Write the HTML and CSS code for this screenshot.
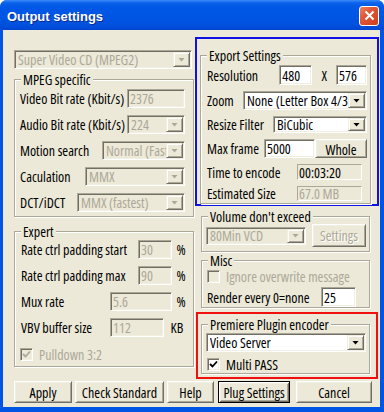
FILE: index.html
```html
<!DOCTYPE html>
<html lang="en">
<head>
  <meta charset="UTF-8" />
  <meta name="viewport" content="width=device-width, initial-scale=1.0"/>
  <title>Output settings</title>
  <link rel="stylesheet" href="styles.css">
</head>
<body>
  <div class="window">
    <div class="titlebar">
      <span class="title">Output settings</span>
      <button class="close" type="button" aria-label="Close">
        <svg width="11" height="11" viewBox="0 0 11 11"><path d="M1.5 1.5 L9.5 9.5 M9.5 1.5 L1.5 9.5" stroke="#fff" stroke-width="2"/></svg>
      </button>
    </div>

    <div class="client">
      <div class="main">
        <!-- left column -->
        <div class="col-left">
          <div class="combo disabled top-combo"><span class="val">Super Video CD (MPEG2)</span><span class="drop"></span></div>

          <fieldset class="group">
            <legend>MPEG specific</legend>
            <div class="gbody mpeg">
              <div class="row h19"><span>Video Bit rate (Kbit/s)</span><span class="field disabled w58">2376</span></div>
              <div class="row h19"><span>Audio Bit rate (Kbit/s)</span><span class="combo disabled w58"><span class="val">224</span><span class="drop"></span></span></div>
              <div class="row h19"><span>Motion search</span><span class="combo disabled w83"><span class="val">Normal (Fast)</span><span class="drop"></span></span></div>
              <div class="row h19"><span>Caculation</span><span class="combo disabled w100"><span class="val">MMX</span><span class="drop"></span></span></div>
              <div class="row h19"><span>DCT/iDCT</span><span class="combo disabled w108"><span class="val">MMX (fastest)</span><span class="drop"></span></span></div>
            </div>
          </fieldset>

          <fieldset class="group expert">
            <legend>Expert</legend>
            <div class="gbody expert-body">
              <div class="row h19"><span class="grow">Rate ctrl padding start</span><span class="field disabled w34">30</span><span class="unit">%</span></div>
              <div class="row h19"><span class="grow">Rate ctrl padding max</span><span class="field disabled w34">90</span><span class="unit">%</span></div>
              <div class="row h19"><span class="grow">Mux rate</span><span class="field disabled w62">5.6</span><span class="unit">%</span></div>
              <div class="row h19"><span class="grow">VBV buffer size</span><span class="field disabled w54">112</span><span class="unit kb">KB</span></div>
              <div class="row h13 chk-row pulldown">
                <span class="check disabled"><svg width="9" height="9" viewBox="0 0 9 9"><path d="M1 4 L3.5 6.5 L8 1.5" fill="none" stroke="#aca899" stroke-width="1.8"/></svg></span>
                <span class="muted">Pulldown 3:2</span>
              </div>
            </div>
          </fieldset>
        </div>

        <!-- right column -->
        <div class="col-right">
          <div class="frame-blue">
            <fieldset class="group export">
              <legend>Export Settings</legend>
              <div class="gbody export-body">
                <div class="row h20">
                  <span class="lbl-res">Resolution</span>
                  <span class="field w33">480</span>
                  <span class="times">X</span>
                  <span class="field w31">576</span>
                </div>
                <div class="row h19"><span>Zoom</span><span class="combo w124"><span class="val">None (Letter Box 4/3)</span><span class="drop"></span></span></div>
                <div class="row h17"><span>Resize Filter</span><span class="combo w94"><span class="val">BiCubic</span><span class="drop"></span></span></div>
                <div class="row h19"><span>Max frame</span><span class="pair"><span class="field w51">5000</span><button class="btn w52" type="button">Whole</button></span></div>
                <div class="row h16"><span>Time to encode</span><span class="static w65">00:03:20</span></div>
                <div class="row h15"><span>Estimated Size</span><span class="static muted w65">67.0 MB</span></div>
              </div>
            </fieldset>
          </div>

          <fieldset class="group side volume">
            <legend>Volume don't exceed</legend>
            <div class="gbody volume-body">
              <div class="row h23">
                <span class="combo disabled w100 h18"><span class="val">80Min VCD</span><span class="drop"></span></span>
                <button class="btn w54" type="button" disabled>Settings</button>
              </div>
            </div>
          </fieldset>

          <fieldset class="group side misc">
            <legend>Misc</legend>
            <div class="gbody misc-body">
              <div class="row h13 chk-row">
                <span class="check disabled"></span>
                <span class="muted">Ignore overwrite message</span>
              </div>
              <div class="row h20"><span class="lbl-render">Render every 0=none</span><span class="field w35">25</span></div>
            </div>
          </fieldset>

          <div class="frame-red">
            <fieldset class="group side">
              <legend>Premiere Plugin encoder</legend>
              <div class="gbody plugin-body">
                <div class="row h19"><span class="combo w160"><span class="val">Video Server</span><span class="drop"></span></span></div>
                <div class="row h13 chk-row multi">
                  <span class="check"><svg width="9" height="9" viewBox="0 0 9 9"><path d="M1 4 L3.5 6.5 L8 1.5" fill="none" stroke="#000" stroke-width="1.8"/></svg></span>
                  <span>Multi PASS</span>
                </div>
              </div>
            </fieldset>
          </div>
        </div>
      </div>

      <div class="buttons">
        <button class="btn b-apply" type="button">Apply</button>
        <button class="btn b-check" type="button">Check Standard</button>
        <button class="btn b-help" type="button">Help</button>
        <button class="btn b-plug default" type="button">Plug Settings</button>
        <button class="btn b-cancel" type="button">Cancel</button>
      </div>
    </div>
  </div>
</body>
</html>
```

FILE: styles.css
```css
body {
  margin: 0;
  background: #fff;
  font-family: "Open Sans", "DejaVu Sans Condensed", sans-serif;
  font-size: 14px;
  font-stretch: 80%;
  color: #000;
}
.window {
  width: 384px;
  height: 412px;
  background: #0055e5;
  border-radius: 7px 7px 0 0;
  display: flex;
  flex-direction: column;
  overflow: hidden;
}
.titlebar {
  height: 30px;
  flex: none;
  box-sizing: border-box;
  display: flex;
  align-items: center;
  justify-content: space-between;
  padding: 0 5px 0 7px;
  background: linear-gradient(#3b8cf8 0, #0a61ea 3px, #0058e6 7px, #0056e4 50%, #0052df 80%, #0047d2 100%);
}
.title {
  color: #fff;
  font: bold 13px "Liberation Sans", sans-serif;
  text-shadow: 1px 1px #0b2a8c;
  padding-top: 2px;
}
.close {
  width: 20px;
  height: 20px;
  padding: 0;
  margin-top: 1px;
  border: 1px solid #fff;
  border-radius: 3px;
  background: linear-gradient(135deg, #e8845f 0, #e0593a 35%, #cc3f1e 100%);
  display: flex;
  align-items: center;
  justify-content: center;
}
.client {
  flex: 1;
  margin: 0 4px 5px 3px;
  background: #ece9d8;
  padding: 7px 0 0 11px;
}
.main {
  display: flex;
  align-items: flex-start;
}
.col-left {
  width: 180px;
  margin-top: 13px;
}
.col-right {
  width: 184px;
  margin-left: 1px;
}

/* group boxes */
.group {
  margin: 0;
  padding: 0;
  border: 1px solid #aca899;
  box-shadow: inset 1px 1px #fff, 1px 1px #fff;
  min-width: 0;
}
.group legend {
  margin-left: 6px;
  padding: 0 2px;
  line-height: 15px;
  background: #ece9d8;
}
.gbody {
  display: flex;
  flex-direction: column;
  gap: 7px;
}
.mpeg { padding: 2px 8px 4px 5px; }
.expert { margin-top: 7px; }
.expert-body { padding: 1px 3px 5px 6px; }
.group:first-of-type { margin-top: 3px; }

.row {
  display: flex;
  align-items: center;
  justify-content: space-between;
  white-space: nowrap;
}
.h13 { height: 13px; }
.h15 { height: 15px; }
.h16 { height: 16px; }
.h17 { height: 17px; }
.h19 { height: 19px; }
.h20 { height: 20px; }
.h23 { height: 23px; }
.grow { flex: 1; }
.unit { width: 18px; text-align: center; }
.unit.kb { width: 26px; }
.chk-row { justify-content: flex-start; gap: 6px; }
.pulldown { margin-top: 4px; margin-left: -1px; }

/* inputs */
.field, .combo, .static {
  box-sizing: border-box;
  height: 100%;
  display: flex;
  align-items: center;
}
.field, .combo {
  border: 1px solid;
  border-color: #aca899 #fff #fff #aca899;
  box-shadow: inset 1px 1px #716f64, inset -1px -1px #f1efe2;
  background: #fff;
  padding: 1px 1px 1px 2px;
}
.combo { padding-left: 3px; }
.static {
  border: 1px solid;
  border-color: #aca899 #fff #fff #aca899;
  padding-left: 1px;
}
.disabled, .muted { color: #aca899; }
.field.disabled, .combo.disabled { background: #ece9d8; }
.top-combo { width: 178px; height: 19px; }
.combo .val {
  flex: 1;
  min-width: 0;
  overflow: hidden;
  white-space: nowrap;
}
.drop {
  width: 17px;
  height: 100%;
  box-sizing: border-box;
  flex: none;
  background: #ece9d8;
  border: 1px solid;
  border-color: #f1efe2 #716f64 #716f64 #f1efe2;
  box-shadow: inset 1px 1px #fff, inset -1px -1px #aca899;
  display: flex;
  align-items: center;
  justify-content: center;
}
.drop::after {
  content: "";
  width: 7px;
  height: 4px;
  background: #000;
  clip-path: polygon(0 0, 100% 0, 50% 100%);
}
.combo.disabled .drop::after { background: #aca899; }

.w31 { width: 31px; }
.w33 { width: 33px; }
.w34 { width: 34px; }
.w35 { width: 35px; }
.w51 { width: 51px; }
.w52 { width: 52px; }
.w54 { width: 54px; }
.w58 { width: 58px; }
.w62 { width: 62px; }
.w65 { width: 65px; margin-right: 5px; }
.w83 { width: 83px; }
.w94 { width: 94px; }
.w100 { width: 100px; }
.w108 { width: 108px; }
.w124 { width: 124px; }
.w160 { width: 160px; }
.combo.h18 { height: 18px; }

.check {
  width: 13px;
  height: 13px;
  box-sizing: border-box;
  flex: none;
  border: 1px solid;
  border-color: #aca899 #fff #fff #aca899;
  box-shadow: inset 1px 1px #716f64, inset -1px -1px #f1efe2;
  background: #fff;
  display: flex;
  align-items: center;
  justify-content: center;
}
.check.disabled { background: #ece9d8; }

/* right column */
.frame-blue {
  border: 2px solid #1010e8;
  padding: 6px 6px 3px 3px;
  height: 169px;
  box-sizing: border-box;
}
.export-body { padding: 2px 3px 2px 6px; gap: 6px; }
.lbl-res { width: 71px; }
.times { width: 21px; text-align: center; }
.pair { display: flex; height: 100%; }
.side { width: 169px; box-sizing: border-box; margin-left: 6px; }
.volume-body { padding: 0 3px 4px 4px; }
.misc { margin-top: 1px; }
.misc-body { padding: 2px 3px 0 5px; gap: 4px; }
.lbl-render { width: 114px; }
.misc-body .row { justify-content: flex-start; }
.frame-red {
  margin: 4px 0 0 1px;
  width: 182px;
  box-sizing: border-box;
  border: 2px solid #f01010;
  padding: 0 6px 3px 3px;
}
.frame-red .side { margin-left: 0; }
.plugin-body { padding: 1px 3px 2px 4px; gap: 6px; }
.multi { margin-left: 1px; }

/* buttons */
.btn {
  font: inherit;
  color: #000;
  white-space: nowrap;
  height: 100%;
  box-sizing: border-box;
  padding: 0;
  background: #ece9d8;
  border: 1px solid;
  border-color: #fff #716f64 #716f64 #fff;
  box-shadow: inset 1px 1px #f1efe2, inset -1px -1px #aca899;
}
.btn:disabled {
  color: #aca899;
  text-shadow: 1px 1px #fff;
}
.buttons {
  display: flex;
  margin-top: 2px;
  height: 22px;
}
.b-apply { width: 58px; }
.b-check { width: 89px; margin-left: 3px; }
.b-help { width: 47px; margin-left: 3px; }
.b-plug { width: 72px; margin-left: 4px; }
.b-cancel { width: 76px; margin-left: 6px; }
.btn.default {
  border: 1px solid #000;
  box-shadow: inset 1px 1px #fff, inset -1px -1px #716f64, inset 2px 2px #f1efe2, inset -2px -2px #aca899;
}
```
